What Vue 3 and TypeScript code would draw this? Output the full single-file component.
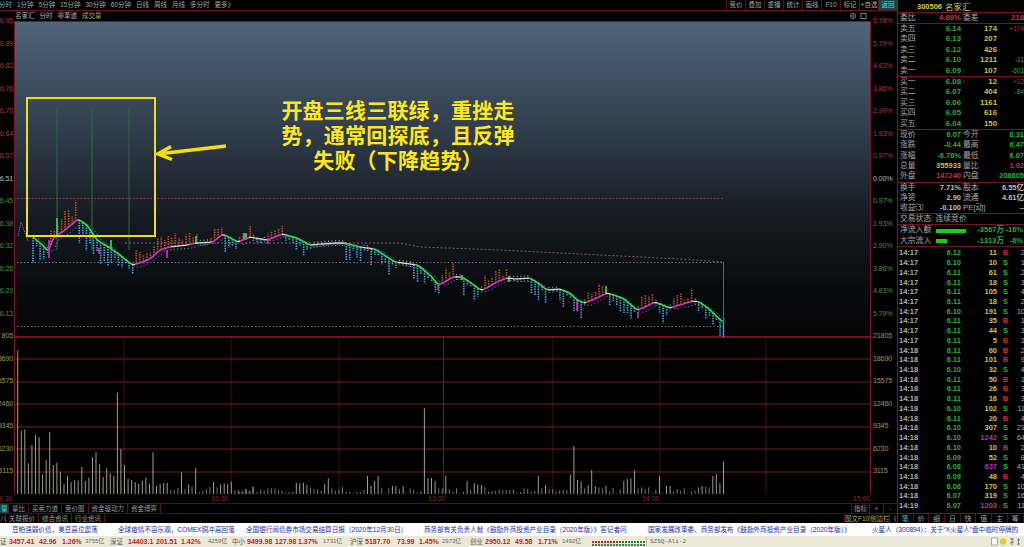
<script setup lang="ts">
const stock = ['分时','1分钟','5分钟','15分钟','30分钟','60分钟','日线','周线','月线','多分时','更多》']
const tools = ['竞价','叠加','重播','统计','画线','F10','标记','+自选','返回']

const main = ['6.95','6.89','6.82','6.76','6.70','6.64','6.57','6.51','6.45','6.38','6.32','6.26','6.20','6.13']
const leftAxis = [...main.map(t => ({ t, c: 'up' })), ...['805','18690','15575','12460','9345','6230','3115'].map(t => ({ t, c: 'vol' }))]
leftAxis.forEach((a, i) => { if (i > 7 && i < 14) a.c = 'down'; if (i === 7) a.c = 'flat' })
const rightAxis = [
  ...['6.78%','5.79%','4.83%','3.86%','2.90%','1.93%','0.97%'].map(t => ({ t, c: 'up' })),
  { t: '0.00%', c: 'flat' },
  ...['0.97%','1.93%','2.90%','3.86%','4.83%','5.79%'].map(t => ({ t, c: 'down' })),
  ...['21805','18690','15575','12460','9345','6230','3115'].map(t => ({ t, c: 'vol' })),
]

const sells = [['卖五','6.14','','174','+174'],['卖四','6.13','','207',''],['卖三','6.12','','426',''],['卖二','6.10','','1211','-11'],['卖一','6.09','↑','107','-601']]
const buys = [['买一','6.08','↑','12','+12'],['买二','6.07','','404','-84'],['买三','6.06','','1161',''],['买四','6.05','','616',''],['买五','6.04','','150','']]
const stats = [
  ['现价','6.07','green','今开','6.31','green'],
  ['涨跌','-0.44','green','最高','6.47','green'],
  ['涨幅','-6.76%','green','最低','6.07','green'],
  ['总量','355933','yellow','量比','1.02','red'],
  ['外盘','147240','red','内盘','208605','green'],
]
const funds = [
  ['换手','7.71%','股本','6.55亿'],
  ['净资','2.90','流通','4.61亿'],
  ['收益⑶','-0.100','PE[动]','–'],
]
const flows = [
  { l: '净流入额', w: 30, v: '-3567万', p: '-16%' },
  { l: '大宗流入', w: 11, v: '-1313万', p: '-6%' },
]
const ticks: [string, string, number, string, number][] = [
  ['14:17','6.12',11,'B',2],['14:17','6.10',10,'S',1],['14:17','6.11',61,'S',2],['14:17','6.11',18,'S',3],
  ['14:17','6.11',105,'S',4],['14:17','6.11',18,'S',2],['14:17','6.10',191,'S',10],['14:17','6.11',35,'B',1],
  ['14:17','6.11',44,'S',3],['14:17','6.11',5,'B',1],['14:18','6.11',60,'B',2],['14:18','6.11',101,'B',9],
  ['14:18','6.10',32,'S',4],['14:18','6.11',50,'B',1],['14:18','6.11',26,'B',3],['14:18','6.11',16,'B',3],
  ['14:18','6.10',102,'S',11],['14:18','6.11',20,'B',4],['14:18','6.10',307,'S',21],['14:18','6.10',1242,'S',64],
  ['14:18','6.10',10,'B',2],['14:18','6.09',52,'S',8],['14:18','6.08',637,'S',41],['14:18','6.09',48,'B',4],
  ['14:18','6.08',170,'S',10],['14:18','6.07',319,'S',16],['14:19','6.07',1203,'S',11],
]
const sideTabs = ['笔','价','细','日','快','值','主','筹']
const tabsA = ['量比','买卖力道','竞价图','资金驱动力','资金博弈']
const tabsB = [['关联报价',''],['综合资讯','hot'],['行业资讯','']]

const news = [
  { t: '豆粕强弱价债，美豆高位震荡', w: 106 },
  { t: '全球疫情不容乐观，COMEX铜冲高回落', w: 128 },
  { t: '全国银行间债券市场交易结算日报（2020年12月30日）', w: 178 },
  { t: '商务部有关负责人就《鼓励外商投资产业目录（2020年版）》答记者问', w: 224 },
  { t: '国家发展改革委、商务部发布《鼓励外商投资产业目录（2020年版）》', w: 224 },
  { t: '火星人（300894）：关于“X火星人”盘中临时停牌的', w: 152 },
]
const indices = [
  { n: '证', a: '3457.41', b: '42.96', c: '1.26%', d: '3755亿', k: 'first' },
  { n: '深证', a: '14403.1', b: '201.51', c: '1.42%', d: '4259亿', k: 'wide' },
  { n: '中小', a: '9499.98', b: '127.98', c: '1.37%', d: '1731亿', k: 'zx' },
  { n: '沪深', a: '5187.70', b: '73.99', c: '1.45%', d: '2973亿', k: 'hs' },
  { n: '创业', a: '2950.12', b: '49.58', c: '1.71%', d: '1492亿', k: 'cy' },
]

// price line, in page coordinates
const pts: [number, number][] = [
  [33,237],[45,247],[48,253],[53,238],[65,230],[78,219],[87,225],[97,240],[110,248],[120,255],[132,265],[140,263],
  [150,259],[160,250],[170,247],[187,245],[197,243],[213,242],[223,234],[238,242],[250,237],[267,240],[283,234],[297,238],
  [310,245],[335,243],[345,243],[360,247],[375,249],[395,262],[418,265],[433,278],[438,285],[443,283],[453,277],[462,277],
  [470,282],[480,290],[485,289],[497,282],[507,278],[517,279],[530,278],[538,283],[547,290],[560,289],[570,293],[577,300],
  [585,303],[597,298],[607,293],[623,298],[637,310],[643,308],[655,302],[670,308],[680,305],[693,301],[700,302],[710,310],[723,322],
]
function yAt(x: number): number {
  for (let i = 1; i < pts.length; i++) {
    if (x <= pts[i][0]) {
      const [x0, y0] = pts[i - 1], [x1, y1] = pts[i]
      return y0 + ((y1 - y0) * (x - x0)) / (x1 - x0)
    }
  }
  return pts[pts.length - 1][1]
}
function smooth(x: number): number {
  let s = 0
  for (let d = -2; d <= 2; d++) s += yAt(Math.max(33, Math.min(723, x + d)))
  return s / 5
}
const rnd = (i: number) => { const v = Math.sin(i * 12.9898) * 43758.5453; return v - Math.floor(v) }

let greenD = '', pinkD = '', whiteD = '', slowD = ''
for (let x = 33; x < 723; x += 1.5) {
  const a = smooth(x), b = smooth(x + 1.5), s = (b - a) / 1.5
  const seg = `M${x} ${a.toFixed(1)}L${x + 1.5} ${b.toFixed(1)}`
  if (s > 0.18) greenD += seg
  else if (s < -0.18) pinkD += seg
  else whiteD += seg
  slowD += `${slowD ? 'L' : 'M'}${x + 5} ${(a + 2 + Math.sin(x / 9)).toFixed(1)}`
}
const blueD: string[] = [], redD: string[] = [], paleD: string[] = []
let n = 0
for (let x = 33; x < 723; x += 3.56) {
  n++
  const y = smooth(x), s = (smooth(x + 3) - smooth(x - 3)) / 6
  const big = x < 120 ? 1.7 : 1.15
  if (s > 0.15) blueD.push(`M${x.toFixed(1)} ${y.toFixed(1)}V${(y + (3 + rnd(n) * 13) * big).toFixed(1)}`)
  else if (s < -0.1) redD.push(`M${x.toFixed(1)} ${y.toFixed(1)}V${(y - (3 + rnd(n) * 9) * big).toFixed(1)}`)
  else paleD.push(`M${x.toFixed(1)} ${(y - 3).toFixed(1)}V${(y + 3).toFixed(1)}`)
}
const blue = blueD.join(''), red = redD.join(''), pale = paleD.join('')

const greenBars = [[57,218,235],[196,236,244],[111,240,248],[244,233,240],[246,233,240],[509,276,282],[606,286,294],[462,275,280]]
const pinkBars = [[49,240,258],[99,248,254],[167,250,258],[268,240,244],[438,285,290],[577,300,311],[638,312,318]]
const tallLines = [57, 92, 129]
const vLines = [124, 231, 339, 553, 660, 766]
const volLines = [359, 382, 404, 427, 449, 472]

// volume bars: top y as read from 3x crops of the reference
const z1 = [32,272,268,370,315,285,292,403,360,276,375,368,395,432,408,427,421,422,381,423,413,352,337,373,411,385,400,408,158,327,375,416,420,426,432,422,413,431,337,437,431,429,428,450,449,443,397,447,434,440,384,457,452,447,441,426,442,433,430,433,425,452,450,452,447,452,440]
const z2 = [275,275,268,272,260,275,268,272,265,265,265,270,272,278,276,275,248,250,248,255,262,267,268,272,252,235,265,272,268,260,275,275,280,275,275,270,228,258,243,228,265,280,265,257,258,268,258,280,265,270,278,272,25,235,234,243,265,265,228,268,275,265,280,275,243,270,250,253,255,262,275,273,272,268,270,270,270,268,278,276,265,267,275,272,228,265,255,267,267,275,270,268,270,225,138,240,245,265,255,210,258,262,265,258,275,263,280,268,243,237,235,212,265,262,267,262,280,270,228,280,258,258,275,268,272,265,280,275,272,262,258,260,262,228,222,250,185]
const bars = [
  ...z1.map((p, i) => ({ x: 17.7 + i * 3.56, y: 340 + p / 3 })),
  ...z2.map((p, i) => ({ x: 239.3 + i * 3.56, y: 400 + p / 3 })),
].map(b => ({ ...b, dim: 494 - b.y < 8 }))
const rulerD = Array.from({ length: 196 }, (_, i) => `M${(17.7 + i * 3.56).toFixed(1)} 494V495`).join('')

const miniUp = [0, 1, 2, 3, 4, 5, 6, 7, 8]
</script>

<template>
  <div class="app">
    <div class="upper">
      <div class="main">
        <div class="toolbar">
          <div class="periods">
            <span v-for="(s, i) in stock" :key="s" :class="{ active: i === 0 }">{{ s }}</span>
          </div>
          <div class="tools">
            <span v-for="(t, i) in tools" :key="t" :class="{ back: i === tools.length - 1 }">{{ t }}</span>
          </div>
        </div>
        <div class="chart-title">
          <span>名家汇</span><span>分时</span><span>非革道</span><span class="gold">成交量</span>
          <svg class="win-icons" width="22" height="8" viewBox="0 0 22 8">
            <circle cx="5" cy="4" r="2.6" fill="none" stroke="#999" stroke-width=".8" />
            <path d="M3.6 4h2.8M5 2.6v2.8" stroke="#999" stroke-width=".7" />
            <rect x="13" y="1.4" width="5" height="5.2" fill="none" stroke="#999" stroke-width=".8" />
          </svg>
        </div>
        <div class="chart-row">
          <div class="axis left">
            <div v-for="(a, i) in leftAxis" :key="i" :class="a.c"><span>{{ a.t }}</span></div>
          </div>
          <div class="plot">
            <svg width="857" height="473" viewBox="14 21 857 473">
              <defs>
                <linearGradient id="sky" x1="0" y1="0" x2="0" y2="1">
                  <stop offset="0" stop-color="#50657b" />
                  <stop offset=".35" stop-color="#303d4b" />
                  <stop offset=".62" stop-color="#161b22" />
                  <stop offset=".85" stop-color="#090a0e" />
                  <stop offset="1" stop-color="#050505" />
                </linearGradient>
              </defs>
              <rect x="14" y="21" width="857" height="316" fill="url(#sky)" />
              <path v-for="v in vLines" :key="v" :d="`M${v} 337V494`" stroke="#3c1216" stroke-width="1" />
              <path d="M443.5 337V494" stroke="#6e1a20" stroke-width="1" />
              <path v-for="l in volLines" :key="l" :d="`M14 ${l}H871`" stroke="#7c1a20" stroke-width="1" />
              <path d="M14 198.5H723" stroke="#8a3f4c" stroke-width="1" stroke-dasharray="1.5 2" />
              <path d="M17 262.5H723M17 326.5H723" stroke="#647676" stroke-width="1" stroke-dasharray="1.5 2" />
              <path d="M125 243H400L420 247L500 250L600 255L680 259L723 262" fill="none" stroke="#7d5f66" stroke-width="1" stroke-dasharray="2 2" />
              <path d="M723.5 262V337" stroke="#4a6a64" stroke-width="1" />
              <path v-for="x in tallLines" :key="x" :d="`M${x} 108V250`" stroke="#2a6e40" stroke-width="1" />
              <path d="M18 236L21 222L28 241" fill="none" stroke="#9a8440" stroke-width="1" stroke-dasharray="1 1" />
              <path :d="slowD" fill="none" stroke="#5b7a80" stroke-width="1" stroke-dasharray="1.5 2" />
              <path :d="blue" stroke="#45a4dc" stroke-width="1.6" stroke-dasharray="1.5 1" />
              <path :d="red" stroke="#c0502a" stroke-width="1.6" stroke-dasharray="1.5 1" />
              <path :d="pale" stroke="#7fa0a0" stroke-width="1" stroke-dasharray="1.5 1" />
              <path v-for="(b, i) in greenBars" :key="'g' + i" :d="`M${b[0]} ${b[1]}V${b[2]}`" stroke="#35e050" stroke-width="1.6" />
              <path v-for="(b, i) in pinkBars" :key="'p' + i" :d="`M${b[0]} ${b[1]}V${b[2]}`" stroke="#d030d0" stroke-width="1.6" />
              <path :d="whiteD" fill="none" stroke="#d8d8d8" stroke-width="1.3" />
              <path :d="greenD" fill="none" stroke="#2ee04a" stroke-width="1.6" />
              <path :d="pinkD" fill="none" stroke="#d535cf" stroke-width="1.6" />
              <path d="M14 337H871" stroke="#a3141c" stroke-width="1.6" />
              <path d="M723.5 322V337" stroke="#45a4dc" stroke-width="1.4" />
              <path d="M14 21.5H871" stroke="#7a1822" stroke-width="1" />
              <path d="M14.5 21V494M870.5 21V494" stroke="#7a1822" stroke-width="1" />
              <path v-for="(b, i) in bars" :key="'v' + i" :d="`M${b.x.toFixed(1)} ${b.y.toFixed(1)}V494.5`" :stroke="b.dim ? '#75755e' : '#a09f84'" stroke-width="1" />
              <path d="M14 494.5H871" stroke="#7a1822" stroke-width="1" />
              <path :d="rulerD" stroke="#a07a60" stroke-width="1" />
            </svg>
            <div class="note-box"></div>
            <svg class="note-arrow" width="72" height="20" viewBox="0 0 72 20">
              <path d="M70 3L6 10.500" stroke="#f5e000" stroke-width="3.500" fill="none" />
              <path d="M15 3.500L2 10.800L16 16.500" stroke="#f5e000" stroke-width="3.500" fill="none" />
            </svg>
            <p class="note-text">开盘三线三联绿，重挫走<br />势，通常回探底，且反弹<br />失败（下降趋势）</p>
          </div>
          <div class="axis right">
            <div v-for="(a, i) in rightAxis" :key="i" :class="a.c"><span>{{ a.t }}</span></div>
          </div>
        </div>
        <div class="time-axis">
          <span class="t930">09:30</span><span class="t1030">10:30</span><span class="t1300">13:00</span><span class="t1400">14:00</span><span class="t1500">15:00</span>
        </div>
        <div class="tabs">
          <span class="sel">量</span><span v-for="t in tabsA" :key="t">{{ t }}</span>
          <div class="indicator"><span>指标</span><span>+</span><span>-</span></div>
        </div>
        <div class="tabs">
          <span class="narrow">八</span><span v-for="t in tabsB" :key="t[0]" :class="t[1]">{{ t[0] }}</span>
          <div class="indicator wide"><span class="gold">图文F10</span><span class="gold">侧边栏</span><span>《</span></div>
        </div>
      </div>

      <aside class="side">
        <div class="head"><b>300506</b><span>名家汇</span></div>
        <div class="quote ratio line">
          <span class="lab">委比</span><b class="red">4.88%</b><span class="lab2">委差</span><b class="red">218</b>
        </div>
        <div class="block line">
          <div v-for="r in sells" :key="r[0]" class="quote">
            <span class="lab">{{ r[0] }}</span><b class="green">{{ r[1] }}</b><i>{{ r[2] }}</i><b class="yellow">{{ r[3] }}</b>
            <em :class="r[4][0] === '+' ? 'red' : 'green'">{{ r[4] }}</em>
          </div>
        </div>
        <div class="block line">
          <div v-for="r in buys" :key="r[0]" class="quote">
            <span class="lab">{{ r[0] }}</span><b class="green">{{ r[1] }}</b><i>{{ r[2] }}</i><b class="yellow">{{ r[3] }}</b>
            <em :class="r[4][0] === '+' ? 'red' : 'green'">{{ r[4] }}</em>
          </div>
        </div>
        <div class="block line">
          <div v-for="r in stats" :key="r[0]" class="stat">
            <span class="lab">{{ r[0] }}</span><b :class="r[2]">{{ r[1] }}</b><span class="lab">{{ r[3] }}</span><b :class="r[5]">{{ r[4] }}</b>
          </div>
        </div>
        <div class="block line">
          <div v-for="r in funds" :key="r[0]" class="stat fund">
            <span class="lab">{{ r[0] }}</span><b class="white">{{ r[1] }}</b><span class="lab">{{ r[2] }}</span><b class="white">{{ r[3] }}</b>
          </div>
        </div>
        <div class="state line">交易状态: 连续竞价</div>
        <div class="block line">
          <div v-for="f in flows" :key="f.l" class="flow">
            <span class="lab">{{ f.l }}</span>
            <div class="track"><div class="fill" :style="{ width: f.w + 'px' }"></div></div>
            <b class="green">{{ f.v }}</b><b class="green">{{ f.p }}</b>
          </div>
        </div>
        <div class="ticks">
          <div v-for="(t, i) in ticks" :key="i" class="tick">
            <span class="time">{{ t[0] }}</span>
            <b class="green">{{ t[1] }}</b>
            <b :class="t[2] >= 500 ? 'purple' : 'yellow'">{{ t[2] }}</b>
            <b class="bs" :class="t[3] === 'B' ? 'red' : 'green'">{{ t[3] }}</b>
            <span class="cnt">{{ t[4] }}</span>
          </div>
        </div>
        <div class="side-tabs">
          <span v-for="(t, i) in sideTabs" :key="t" :class="{ on: i === 0 }">{{ t }}</span>
        </div>
      </aside>
    </div>

    <div class="news">
      <span v-for="n2 in news" :key="n2.t" :style="{ width: n2.w + 'px' }">{{ n2.t }}</span>
    </div>

    <div class="status">
      <div v-for="g in indices" :key="g.n" class="idx" :class="g.k">
        <span>{{ g.n }}</span><b>{{ g.a }}</b><b>{{ g.b }}</b><b>{{ g.c }}</b><span>{{ g.d }}</span>
      </div>
      <div class="mini">
        <span v-for="i in miniUp" :key="i" class="m"></span>
        <span v-for="i in miniUp" :key="'b' + i" class="m alt"></span>
      </div>
      <span class="server">SZSQ-Ali-2</span>
      <svg class="tray" width="30" height="9" viewBox="0 0 30 9">
        <rect x=".5" y="1" width="6" height="7" fill="#fff" stroke="#999" stroke-width=".8" />
        <circle cx="12" cy="4.500" r="3.200" fill="#e8cf1e" />
        <path d="M19 2h4M21 1v7M19 6l4-1" stroke="#666" stroke-width=".8" fill="none" />
        <path d="M26 3h3M27.500 1v7M26 7h3" stroke="#666" stroke-width=".7" />
      </svg>
    </div>
  </div>
</template>

<style>
body { margin: 0; background: #000; }
</style>

<style scoped>
.app {
  width: 1024px;
  height: 547px;
  overflow: hidden;
  background: #000;
  color: #b8b8b8;
  font-family: "Liberation Sans", "Noto Sans CJK SC", sans-serif;
  font-size: 7px;
  display: flex;
  flex-direction: column;
}
.upper { display: flex; height: 523px; }
.main { width: 897px; display: flex; flex-direction: column; flex: none; }

.toolbar {
  height: 10px;
  border-bottom: 1px solid #6d1420;
  display: flex;
  justify-content: space-between;
  flex: none;
  box-sizing: content-box;
}
.periods { display: flex; gap: 5px; margin-left: -1px; font-size: 6.500px; line-height: 9px; color: #a8a8a8; }
.periods .active { color: #66b8c0; }
.tools { display: flex; font-size: 6.500px; line-height: 9px; }
.tools span { width: 19px; text-align: center; border-left: 1px solid #5a1420; box-sizing: border-box; color: #a8a8a8; }
.tools .back { background: #0f4a4a; color: #6ed0d0; }

.chart-title {
  height: 10px;
  padding-left: 15px;
  display: flex;
  gap: 5px;
  font-size: 6.500px;
  line-height: 10px;
  color: #b0b0b0;
  position: relative;
  flex: none;
}
.gold { color: #a8a860; }
.win-icons { position: absolute; left: 848px; top: 1px; }

.chart-row { display: flex; height: 473px; flex: none; }
.axis { flex: none; margin-top: -11px; height: 495px; display: grid; grid-auto-rows: 22.530px; line-height: 22.530px; font-size: 7.200px; letter-spacing: -.2px; position: relative; z-index: 1; }
.axis.left { width: 14px; }
.axis.left > div { display: flex; justify-content: flex-end; overflow: hidden; padding-right: 1px; }
.axis.right { width: 26px; padding-left: 2px; box-sizing: border-box; }
.axis .up { color: #a8383c; }
.axis .down { color: #4a8f4a; }
.axis .flat { color: #b8b8b8; }
.axis .vol { color: #9a9a50; }

.plot { position: relative; width: 857px; height: 473px; flex: none; }
.plot > svg:first-child { display: block; }
.note-box { position: absolute; left: 12px; top: 76px; width: 126px; height: 136px; border: 2px solid #f2dc14; }
.note-arrow { position: absolute; left: 142px; top: 122px; }
.note-text {
  position: absolute;
  left: 250px;
  top: 76px;
  width: 268px;
  margin: 0;
  text-align: center;
  color: #ffe81a;
  font-family: "Noto Sans CJK SC", sans-serif;
  font-weight: 700;
  font-size: 21px;
  letter-spacing: .2px;
  line-height: 25px;
  white-space: nowrap;
}

.time-axis { height: 9px; position: relative; flex: none; color: #8a2c2c; font-size: 7px; line-height: 9px; }
.time-axis span { position: absolute; top: 0; }
.t930 { left: -5px; }
.t1030 { left: 211px; }
.t1300 { left: 428px; }
.t1400 { left: 642px; }
.t1500 { left: 853px; }

.tabs { height: 10px; display: flex; border-top: 1px solid #4d1018; box-sizing: border-box; font-size: 6.500px; line-height: 9px; position: relative; flex: none; color: #9c9c9c; }
.tabs > span { padding: 0 3px; border-right: 1px solid #5a1420; }
.tabs .sel { background: #0f4a4a; color: #66d0d0; padding: 0 1px; width: 6px; }
.tabs .narrow { width: 3px; padding: 0 2px 0 0; }
.tabs .hot { color: #a8a860; }
.indicator { margin-left: auto; flex: none; display: flex; justify-content: flex-end; font-size: 6.500px; color: #9c9c9c; white-space: nowrap; }
.indicator span { width: 14px; flex: none; text-align: center; border-left: 1px solid #5a1420; box-sizing: border-box; }
.indicator span:first-child { width: 18px; }
.indicator.wide { width: 53px; }
.indicator.wide span:first-child { width: 25px; }
.indicator.wide span:nth-child(2) { width: 20px; }
.indicator.wide span:nth-child(3) { width: 8px; }

.side { width: 127px; flex: none; border-left: 1px solid #7a1822; box-sizing: border-box; display: flex; flex-direction: column; font-size: 8px; }
.line { border-bottom: 1px solid #6e1820; box-sizing: border-box; }
.head { height: 13px; display: flex; align-items: center; gap: 3px; padding-left: 19px; border-bottom: 1px solid #6e1820; box-sizing: border-box; flex: none; }
.head b { color: #d0d040; font-size: 7.500px; }
.head span { color: #c8c890; font-size: 8.500px; }

.lab { color: #a8a8a8; white-space: nowrap; font-size: 7.800px; }
b { font-weight: 700; }
.green { color: #28b030; }
.red { color: #c8303a; }
.yellow { color: #c4c444; }
.white { color: #bdbdbd; }
.purple { color: #a838b8; }

.quote { display: grid; grid-template-columns: 2px 20px 41px 6px 30px 27px; height: 10.400px; line-height: 10.400px; font-size: 7.800px; }
.quote .lab { grid-column: 2; }
.quote b { text-align: right; white-space: nowrap; }
.quote i { font-style: normal; color: #c8303a; font-size: 7px; padding-left: 1px; }
.quote em { font-style: normal; text-align: right; font-size: 6.500px; white-space: nowrap; }
.ratio { height: 11px; grid-template-columns: 2px 20px 41px 22px 41px; line-height: 10px; flex: none; }
.ratio .lab2 { color: #a8a8a8; padding-left: 2px; }
.block { flex: none; }

.stat { display: grid; grid-template-columns: 2px 20px 41px 2px 19px 42px; height: 10.400px; line-height: 10.400px; font-size: 7.500px; white-space: nowrap; }
.stat.fund { height: 10.200px; line-height: 10.200px; }
.stat .lab:first-child { grid-column: 2; }
.stat .lab:nth-child(3) { grid-column: 5; }
.stat b { text-align: right; }
.state { height: 11px; flex: none; padding-left: 2px; line-height: 10px; font-size: 7.800px; color: #a8a8a8; }

.flow { display: flex; height: 10.500px; line-height: 10.500px; padding-left: 2px; font-size: 7.500px; white-space: nowrap; align-items: center; }
.flow .lab { width: 36px; flex: none; }
.track { width: 31px; flex: none; }
.fill { height: 4px; background: #12d21a; }
.flow b:nth-of-type(1) { width: 37px; text-align: right; flex: none; }
.flow b:nth-of-type(2) { width: 19px; text-align: right; flex: none; }

.ticks { flex: none; height: 264px; padding-top: 1px; box-sizing: border-box; }
.tick { display: grid; grid-template-columns: 21px 41px 36px 17px 11px; height: 9.730px; line-height: 9.730px; font-size: 7.500px; padding-left: 1px; white-space: nowrap; }
.tick .time { color: #b0b0b0; font-weight: 700; }
.tick b { text-align: right; }
.tick .bs { text-align: center; }
.tick .cnt { text-align: right; color: #a8a8a8; }

.side-tabs { display: grid; grid-template-columns: repeat(8, 15.700px); height: 10px; line-height: 9px; border-top: 1px solid #6e1820; box-sizing: border-box; font-size: 7px; margin-top: auto; }
.side-tabs span { text-align: center; border-right: 1px solid #4d1018; color: #a0a0a0; }
.side-tabs .on { color: #55c8c8; }

.news { height: 13px; background: #fdfdfd; display: flex; padding-left: 12px; font-size: 6.600px; line-height: 13px; color: #1c2eaa; white-space: nowrap; overflow: hidden; flex: none; }
.news span { flex: none; overflow: hidden; }

.status { height: 11px; background: #ece9d8; display: flex; align-items: center; font-size: 6.500px; color: #555; white-space: nowrap; flex: none; }
.idx { display: grid; flex: none; line-height: 11px; }
.idx b { color: #c81a1a; font-size: 7px; }
.idx span:last-child { font-size: 6px; color: #666; }
.first { width: 110px; grid-template-columns: 9px 30px 23px 23px 25px; }
.wide { width: 122px; grid-template-columns: 18px 28px 25px 27px 24px; }
.zx { width: 118px; grid-template-columns: 15px 28px 23px 25px 27px; }
.hs { width: 120px; grid-template-columns: 15px 32px 22px 23px 28px; }
.cy { width: 120px; grid-template-columns: 15px 30px 23px 24px 28px; }
.mini { display: flex; gap: 1px; align-items: flex-end; width: 58px; height: 9px; margin-left: -1px; padding-left: 3px; box-sizing: border-box; flex: none; border-right: 1px solid #b9b6a6; }
.m { width: 2px; height: 2px; background: #1f8a2e; box-shadow: 0 -3px 0 #d8202a; }
.alt { box-shadow: 0 -3px 0 #14882a; }
.server { margin-left: 3px; font-size: 6px; color: #666; font-family: "Liberation Mono", monospace; }
.tray { margin-left: auto; margin-right: 3px; }
</style>
